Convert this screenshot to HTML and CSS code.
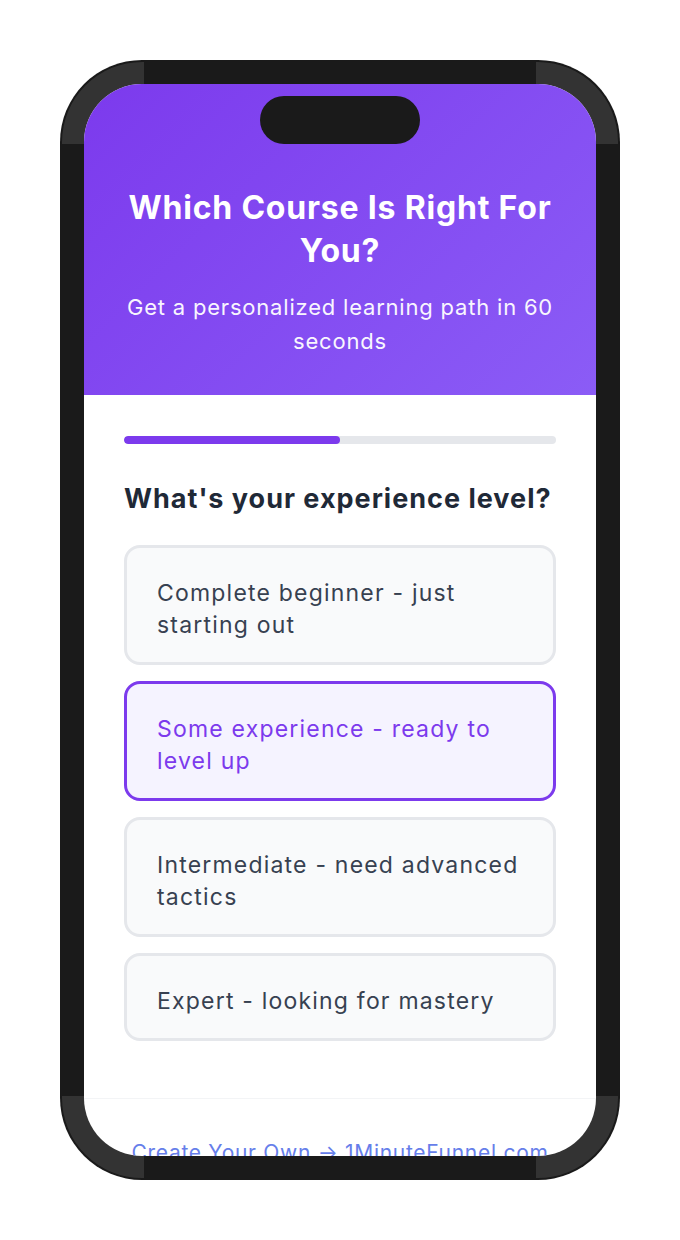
FILE: index.html
```html
<!DOCTYPE html>
<html>
<head>
<meta charset="utf-8">
<link rel="stylesheet" href="styles.css">
</head>
<body>
<div class="stage">
  <div class="phone">
    <div class="screen">
      <div class="notch"></div>
      <header class="hero">
        <h1 class="hero-title">Which Course Is Right For You?</h1>
        <p class="hero-sub">Get a personalized learning path in 60 seconds</p>
      </header>
      <main class="quiz">
        <div class="progress"><div class="progress-fill" style="width:50%"></div></div>
        <h2 class="question">What's your experience level?</h2>
        <div class="options">
          <div class="option">Complete beginner - just starting out</div>
          <div class="option option-selected">Some experience - ready to level up</div>
          <div class="option">Intermediate - need advanced tactics</div>
          <div class="option">Expert - looking for mastery</div>
        </div>
      </main>
      <footer class="foot">
        <a class="foot-link">Create Your Own → 1MinuteFunnel.com</a>
      </footer>
    </div>
  </div>
</div>
</body>
</html>
```
FILE: styles.css
```css
* { box-sizing: border-box; }
html, body { margin: 0; padding: 0; background: #ffffff; }
body { font-family: Inter, "Noto Sans", sans-serif; }

.stage {
  width: 680px;
  height: 1240px;
  padding-top: 60px;
  display: flex;
  justify-content: center;
  align-items: flex-start;
}

.phone {
  width: 560px;
  height: 1120px;
  border-radius: 82px;
  padding: 24px;
  background-color: #1a1a1a;
  background-image:
    linear-gradient(#333333, #333333),
    linear-gradient(#333333, #333333),
    linear-gradient(#333333, #333333),
    linear-gradient(#333333, #333333);
  background-size: 84px 84px;
  background-repeat: no-repeat;
  background-position: left top, right top, left bottom, right bottom;
  box-shadow: inset 0 0 0 2px #1a1a1a;
}

.screen {
  position: relative;
  width: 512px;
  height: 1072px;
  border-radius: 58px;
  overflow: hidden;
  background: #ffffff;
  display: flex;
  flex-direction: column;
}

.notch {
  position: absolute;
  top: 12px;
  left: 176px;
  width: 160px;
  height: 48px;
  border-radius: 24px;
  background: #1a1a1a;
}

.hero {
  background: linear-gradient(135deg, #7c3aed 0%, #8b5cf6 100%);
  padding: 102px 36px 37px;
  text-align: center;
  color: #ffffff;
}

.hero-title {
  margin: 0 0 18px;
  font-size: 32px;
  line-height: 43px;
  font-weight: 700;
  letter-spacing: 0.8px;
}

.hero-sub {
  margin: 0;
  font-size: 22px;
  line-height: 34px;
  font-weight: 400;
  letter-spacing: 0.8px;
  opacity: 0.95;
}

.quiz {
  padding: 41px 40px 57px;
  border-bottom: 1px solid #f3f4f6;
}

.progress {
  height: 8px;
  border-radius: 4px;
  background: #e5e7eb;
  overflow: hidden;
}

.progress-fill {
  height: 100%;
  border-radius: 4px;
  background: #7c3aed;
}

.question {
  margin: 37px 0 28px;
  font-size: 27px;
  line-height: 36px;
  font-weight: 700;
  letter-spacing: 1px;
  color: #1f2937;
}

.options {
  display: flex;
  flex-direction: column;
  gap: 16px;
}

.option {
  border: 3px solid #e5e7eb;
  border-radius: 16px;
  background: #f9fafb;
  padding: 29px 30px 21px;
  font-size: 23px;
  line-height: 32px;
  letter-spacing: 1.2px;
  color: #374151;
}

.option-selected {
  border-color: #7c3aed;
  background: #f5f3ff;
  color: #7c3aed;
}

.foot {
  padding: 40px 30px;
  text-align: center;
}

.foot-link {
  font-size: 21px;
  line-height: 28px;
  letter-spacing: 0.7px;
  color: #667eea;
  text-decoration: none;
}
```
